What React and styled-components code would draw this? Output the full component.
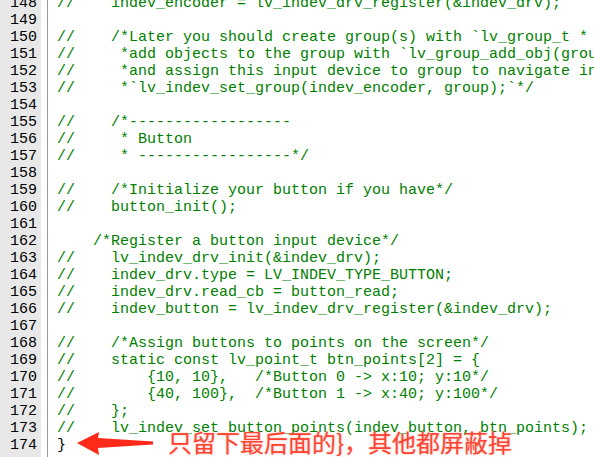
import React from "react";
import styled, { createGlobalStyle } from "styled-components";

const GlobalStyle = createGlobalStyle`
  html, body {
    margin: 0;
    padding: 0;
    background: #fff;
  }
`;

const Editor = styled.div`
  position: relative;
  width: 594px;
  height: 457px;
  overflow: hidden;
  display: flex;
  background: #fff;
  font-family: "Liberation Mono", "DejaVu Sans Mono", monospace;
  font-size: 15px;
  line-height: 17px;
`;

const Gutter = styled.div`
  width: 41px;
  flex: none;
  background: #e8e8e8;
  color: #000;
  text-align: right;
  box-sizing: border-box;
  padding-right: 4px;
  margin-right: 6px;
`;

const Divider = styled.div`
  width: 1px;
  flex: none;
  background: #9a9a9a;
`;

const Code = styled.div`
  flex: 1;
  padding-left: 9px;
  white-space: pre;
  overflow: hidden;
`;

const Lines = styled.div`
  margin-top: -5px;
`;

const Row = styled.div`
  height: 17px;
  color: ${(p) => (p.$plain ? "#000" : "#008000")};
`;

const Note = styled.div`
  position: absolute;
  left: 76px;
  top: 428px;
  display: flex;
  align-items: center;
  gap: 12px;
`;

const NoteText = styled.span`
  font-family: "Noto Sans CJK SC", sans-serif;
  font-size: 24px;
  font-weight: 400;
  line-height: 28px;
  color: #ff4433;
  text-shadow: 0 0 2px rgba(255, 90, 70, 0.5);
`;

const lines = [
  "//    indev_encoder = lv_indev_drv_register(&indev_drv);",
  "",
  "//    /*Later you should create group(s) with `lv_group_t * group = lv_group_create()`,",
  "//     *add objects to the group with `lv_group_add_obj(group, obj)`",
  "//     *and assign this input device to group to navigate in it:",
  "//     *`lv_indev_set_group(indev_encoder, group);`*/",
  "",
  "//    /*------------------",
  "//     * Button",
  "//     * -----------------*/",
  "",
  "//    /*Initialize your button if you have*/",
  "//    button_init();",
  "",
  "    /*Register a button input device*/",
  "//    lv_indev_drv_init(&indev_drv);",
  "//    indev_drv.type = LV_INDEV_TYPE_BUTTON;",
  "//    indev_drv.read_cb = button_read;",
  "//    indev_button = lv_indev_drv_register(&indev_drv);",
  "",
  "//    /*Assign buttons to points on the screen*/",
  "//    static const lv_point_t btn_points[2] = {",
  "//        {10, 10},   /*Button 0 -> x:10; y:10*/",
  "//        {40, 100},  /*Button 1 -> x:40; y:100*/",
  "//    };",
  "//    lv_indev_set_button_points(indev_button, btn_points);",
  "}",
];

function Arrow() {
  return (
    <svg width="80" height="28" viewBox="0 0 80 28">
      <path
        d="M1 15 L23 4 L22 10 L77 13.5 L77 16.5 L22 20 L23 27 Z"
        fill="#ff2a1a"
      />
    </svg>
  );
}

export default function App() {
  return (
    <>
      <GlobalStyle />
      <Editor>
        <Gutter>
          <Lines>
            {lines.map((_, i) => (
              <Row key={i} $plain>
                {148 + i}
              </Row>
            ))}
          </Lines>
        </Gutter>
        <Divider />
        <Code>
          <Lines>
            {lines.map((l, i) => (
              <Row key={i} $plain={l === "}"}>
                {l || " "}
              </Row>
            ))}
          </Lines>
        </Code>
        <Note>
          <Arrow />
          <NoteText>只留下最后面的}，其他都屏蔽掉</NoteText>
        </Note>
      </Editor>
    </>
  );
}
